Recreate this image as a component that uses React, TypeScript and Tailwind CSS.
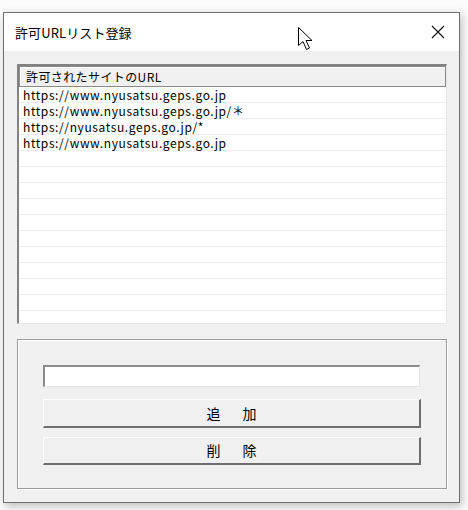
const urls = [
  'https://www.nyusatsu.geps.go.jp',
  'https://www.nyusatsu.geps.go.jp/＊',
  'https://nyusatsu.geps.go.jp/*',
  'https://www.nyusatsu.geps.go.jp',
]

const ROW_COUNT = 15

const font = { fontFamily: '"Noto Sans CJK JP", "Liberation Sans", sans-serif' }

const Cursor = () => (
  <svg
    className="absolute left-[297px] top-[26px]"
    width="20"
    height="26"
    viewBox="0 0 20 26"
  >
    <path
      d="M1.5 1.5 L1.5 19.5 L6 15.5 L9.5 23.5 L12.5 22 L9 14.5 L15 14.5 Z"
      fill="#fff"
      stroke="#000"
      strokeWidth="1"
      strokeLinejoin="miter"
    />
  </svg>
)

const App = () => {
  const rows = Array.from({ length: ROW_COUNT }, (_, i) => urls[i] ?? '')

  return (
    <div className="relative w-[468px] h-[510px] bg-[#fbfbfb] overflow-hidden" style={font}>
      <div className="ml-[3px] mt-[12px] w-[457px] h-[491px] border border-[#6f6f6f] flex flex-col shadow-[2px_3px_8px_rgba(0,0,0,0.25)]">
        {/* title bar */}
        <div className="h-[38px] bg-white flex items-center justify-between pl-[11px] pr-[14px] shrink-0">
          <span className="text-[13px] text-black leading-none tracking-[0.1px]">許可URLリスト登録</span>
          <svg width="14" height="14" viewBox="0 0 14 14">
            <path d="M1 1 L13 13 M13 1 L1 13" stroke="#111" strokeWidth="1.1" />
          </svg>
        </div>

        <div className="flex-1 bg-[#f0f0f0] pt-[13px] pl-[13px] pr-[11px] flex flex-col">
          {/* list view */}
          <div className="h-[260px] w-[430px] border-l-2 border-t-2 border-l-[#828282] border-t-[#828282] border-r border-b border-r-[#e6e6e6] border-b-[#e6e6e6] bg-white overflow-hidden flex flex-col">
            <div className="h-[21px] shrink-0 border border-[#8a8a8a] bg-[#f0f0f0] flex items-center pl-[6px] shadow-[inset_1px_1px_0_#ffffff]">
              <span className="text-[12px] text-black leading-none tracking-[0.4px]">許可されたサイトのURL</span>
            </div>
            {rows.map((u, i) => (
              <div
                key={i}
                className="h-[16px] shrink-0 border-b border-[#efefef] flex items-center pl-[4px]"
              >
                <span className="text-[12px] text-black leading-none whitespace-nowrap tracking-[0.6px]">{u}</span>
              </div>
            ))}
          </div>

          {/* group box */}
          <div className="mt-[15px] w-[430px] h-[150px] border border-[#9a9a9a] shadow-[inset_1px_1px_0_#ffffff,1px_1px_0_#ffffff] flex flex-col pt-[25px] pl-[25px]">
            <div className="w-[377px] h-[22px] bg-white border-t-2 border-l-2 border-[#8c8c8c] border-r border-b border-r-[#e3e3e3] border-b-[#e3e3e3]" />
            <button className="mt-[12px] w-[378px] h-[29px] bg-[#f0f0f0] border-t border-l border-t-white border-l-white border-r-2 border-b-2 border-r-[#6e6e6e] border-b-[#6e6e6e] flex items-center justify-center gap-[22px] text-[14px] text-black">
              <span>追</span>
              <span>加</span>
            </button>
            <button className="mt-[9px] w-[378px] h-[28px] bg-[#f0f0f0] border-t border-l border-t-white border-l-white border-r-2 border-b-2 border-r-[#6e6e6e] border-b-[#6e6e6e] flex items-center justify-center gap-[22px] text-[14px] text-black">
              <span>削</span>
              <span>除</span>
            </button>
          </div>
        </div>
      </div>
      <Cursor />
    </div>
  )
}

export default App
